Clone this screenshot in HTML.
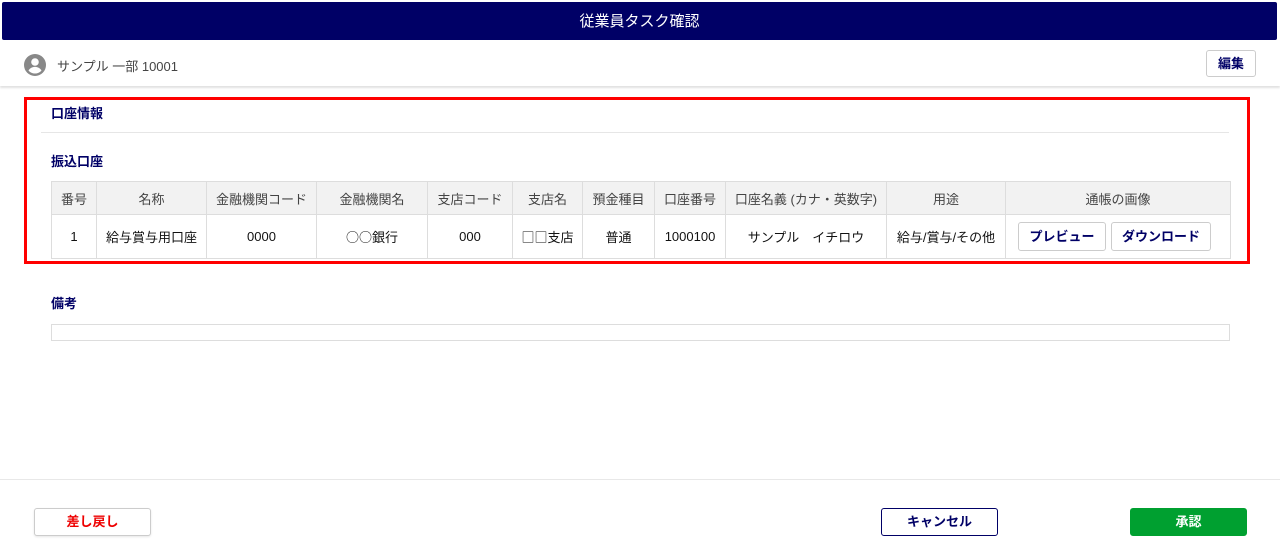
<!DOCTYPE html>
<html><head><meta charset="utf-8"><style>
*{box-sizing:border-box;margin:0;padding:0}
body{width:1280px;height:560px;background:#fff;font-family:"Liberation Sans","Noto Sans CJK JP",sans-serif;position:relative;overflow:hidden;color:#222}
.a{position:absolute}
.hdr{left:2px;top:2px;width:1275px;height:38px;background:#000066;color:#fff;font-size:15px;text-align:center;line-height:39px;border-radius:2px}
.bar{left:0;top:40px;width:1280px;height:46px;background:#fff;box-shadow:0 2px 2px rgba(0,0,0,.12)}
.btn{position:absolute;border:1px solid #ccc;border-radius:3px;background:#fff;font-size:13px;font-weight:bold;text-align:center;color:#000066}
.h{font-size:13px;font-weight:bold;color:#000066}
table{border-collapse:collapse;font-size:13px;table-layout:fixed}
td,th{border:1px solid #ddd;text-align:center;font-weight:normal}
th{background:#f2f2f2;height:33px;color:#444}
td{height:44px;color:#111}
.j{font-family:"Noto Sans CJK JP",sans-serif}
</style></head><body>
<div class="a hdr">従業員タスク確認</div>
<div class="a bar"></div>
<svg class="a" style="left:24px;top:54px" width="22" height="22" viewBox="0 0 22 22"><circle cx="11" cy="11" r="11" fill="#888"/><circle cx="11" cy="8" r="3.8" fill="#fff"/><path d="M4.5 16.5c1.5-2.6 4-3.6 6.5-3.6s5 1 6.5 3.6c-1.7 2-4 3-6.5 3s-4.8-1-6.5-3z" fill="#fff"/></svg>
<div class="a" style="left:57px;top:56px;font-size:13px;color:#444">サンプル 一部 10001</div>
<div class="btn" style="left:1206px;top:50px;width:50px;height:27px;line-height:25px">編集</div>
<div class="a" style="left:24px;top:97px;width:1226px;height:167px;border:3px solid #f00"></div>
<div class="a h" style="left:51px;top:103px">口座情報</div>
<div class="a" style="left:41px;top:132px;width:1188px;height:1px;background:#e6e6e6"></div>
<div class="a h" style="left:51px;top:151px">振込口座</div>
<table class="a" style="left:51px;top:181px;width:1179px">
<colgroup><col style="width:45px"><col style="width:110px"><col style="width:110px"><col style="width:111px"><col style="width:85px"><col style="width:70px"><col style="width:72px"><col style="width:71px"><col style="width:161px"><col style="width:119px"><col style="width:225px"></colgroup>
<tr><th>番号</th><th>名称</th><th>金融機関コード</th><th>金融機関名</th><th>支店コード</th><th>支店名</th><th>預金種目</th><th>口座番号</th><th>口座名義 (カナ・英数字)</th><th>用途</th><th>通帳の画像</th></tr>
<tr><td>1</td><td>給与賞与用口座</td><td>0000</td><td class="j">○○銀行</td><td>000</td><td class="j">□□支店</td><td>普通</td><td>1000100</td><td>サンプル　イチロウ</td><td>給与/賞与/その他</td><td style="position:relative"><div class="btn" style="left:12px;top:7px;width:88px;height:29px;line-height:27px">プレビュー</div><div class="btn" style="left:105px;top:7px;width:100px;height:29px;line-height:27px">ダウンロード</div></td></tr>
</table>
<div class="a h" style="left:51px;top:293px">備考</div>
<div class="a" style="left:51px;top:324px;width:1179px;height:17px;border:1px solid #ddd"></div>
<div class="a" style="left:0;top:479px;width:1280px;height:1px;background:#e8e8e8"></div>
<div class="btn" style="left:34px;top:508px;width:117px;height:28px;line-height:26px;color:#e00;box-shadow:0 1px 2px rgba(0,0,0,.1)">差し戻し</div>
<div class="btn" style="left:881px;top:508px;width:117px;height:28px;line-height:26px;border-color:#000066">キャンセル</div>
<div class="btn" style="left:1130px;top:508px;width:117px;height:28px;line-height:26px;background:#00a030;border-color:#00a030;color:#fff">承認</div>
</body></html>
